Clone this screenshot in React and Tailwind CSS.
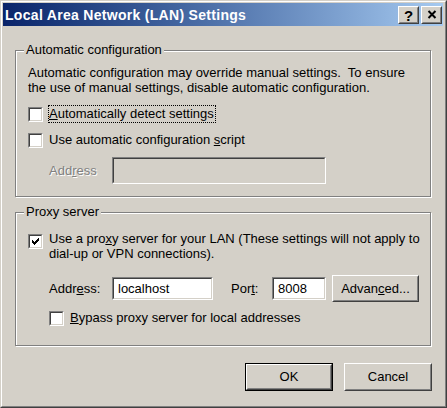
import React from 'react';

const face = 'bg-[#d4d0c8]';

function CheckBox({ checked }) {
  return (
    <div className="w-[15px] h-[15px] shrink-0 border border-t-[#808080] border-l-[#808080] border-b-white border-r-white">
      <div className="w-full h-full border border-t-[#404040] border-l-[#404040] border-b-[#d4d0c8] border-r-[#d4d0c8] bg-white flex items-center justify-center">
        {checked && (
          <svg width="7" height="7" viewBox="0 0 7 7" shapeRendering="crispEdges">
            <path
              fill="#000"
              d="M6 0h1v1h-1z M5 1h2v1h-2z M0 2h1v1h-1z M4 2h3v1h-3z M0 3h2v1h-2z M3 3h3v1h-3z M0 4h5v1h-5z M1 5h3v1h-3z M2 6h1v1h-1z"
            />
          </svg>
        )}
      </div>
    </div>
  );
}

function TextBox({ value, disabled, className }) {
  return (
    <div className={`border border-t-[#808080] border-l-[#808080] border-b-white border-r-white ${className}`}>
      <div
        className={`w-full h-full border border-t-[#404040] border-l-[#404040] border-b-[#d4d0c8] border-r-[#d4d0c8] flex items-center px-[4px] ${
          disabled ? 'bg-[#d4d0c8]' : 'bg-white'
        }`}
      >
        {value}
      </div>
    </div>
  );
}

function Raised({ children, className }) {
  return (
    <div className={`border border-t-white border-l-white border-b-[#404040] border-r-[#404040] ${className}`}>
      <div className="w-full h-full border border-t-[#d4d0c8] border-l-[#d4d0c8] border-b-[#808080] border-r-[#808080] flex items-center justify-center">
        {children}
      </div>
    </div>
  );
}

function Group({ label, className, children }) {
  return (
    <div
      className={`relative w-[416px] border border-[#808080] shadow-[inset_1px_1px_0_#fff,1px_1px_0_#fff] ${className}`}
    >
      <span className={`absolute left-[8px] top-[-9px] px-[2px] leading-[16px] ${face}`}>{label}</span>
      {children}
    </div>
  );
}

export default function App() {
  return (
    <div className="w-[447px] h-[408px] font-['Liberation_Sans',Arial,sans-serif] text-[13px] text-black">
      <div className={`w-full h-full border border-t-[#d4d0c8] border-l-[#d4d0c8] border-b-[#404040] border-r-[#404040] ${face}`}>
        <div className="w-full h-full border border-t-white border-l-white border-b-[#808080] border-r-[#808080] p-[1px] pr-[2px] flex flex-col">
          {/* title bar */}
          <div className="h-[23px] shrink-0 flex items-center bg-linear-to-r from-[#0a246a] to-[#a6caf0] pl-[2px] pr-[1px]">
            <span className="text-white font-bold text-[14px] leading-none tracking-[0.3px]">
              Local Area Network (LAN) Settings
            </span>
            <div className="ml-auto flex gap-[2px]">
              <Raised className="w-[21px] h-[18px] bg-[#d4d0c8]">
                <span className="font-bold text-[15px] leading-none mt-[1px]">?</span>
              </Raised>
              <Raised className="w-[21px] h-[18px] bg-[#d4d0c8]">
                <svg width="10" height="9" viewBox="0 0 10 9">
                  <path d="M1.5 1 L8.5 8 M8.5 1 L1.5 8" stroke="#000" strokeWidth="2" />
                </svg>
              </Raised>
            </div>
          </div>

          {/* body */}
          <div className="flex flex-col pl-[12px]">
            <Group label="Automatic configuration" className="mt-[24px] h-[147px]">
              <div className="pl-[12px] pt-[14px] leading-[15px] whitespace-pre">
                <div>Automatic configuration may override manual settings.  To ensure</div>
                <div>the use of manual settings, disable automatic configuration.</div>
              </div>
              <div className="flex items-center pl-[12px] mt-[10px] h-[18px]">
                <CheckBox />
                <span className="ml-[5px] border border-dotted border-black h-[18px] flex items-center pr-[1px]">
                  <u>A</u>utomatically detect settings
                </span>
              </div>
              <div className="flex items-center pl-[12px] mt-[8px] h-[18px]">
                <CheckBox />
                <span className="ml-[6px]">
                  Use automatic configuration <u>s</u>cript
                </span>
              </div>
              <div className="flex items-center pl-[33px] mt-[8px]">
                <span className="w-[63px] text-[#808080] [text-shadow:1px_1px_0_#fff]">
                  Add<u>r</u>ess
                </span>
                <TextBox disabled className="w-[214px] h-[27px]" />
              </div>
            </Group>

            <Group label="Proxy server" className="mt-[15px] h-[134px]">
              <div className="flex items-start pl-[12px] mt-[18px]">
                <div className="mt-[3px]">
                  <CheckBox checked />
                </div>
                <div className="ml-[6px] leading-[15px]">
                  <div>
                    Use a pro<u>x</u>y server for your LAN (These settings will not apply to
                  </div>
                  <div>dial-up or VPN connections).</div>
                </div>
              </div>
              <div className="flex items-center pl-[33px] mt-[14px] h-[27px]">
                <span className="w-[63px]">
                  Addr<u>e</u>ss:
                </span>
                <TextBox value="localhost" className="w-[101px] h-[23px]" />
                <span className="ml-[18px] w-[41px]">
                  Por<u>t</u>:
                </span>
                <TextBox value="8008" className="w-[54px] h-[23px]" />
                <Raised className="ml-[6px] w-[87px] h-[27px]">
                  Advan<u>c</u>ed...
                </Raised>
              </div>
              <div className="flex items-center pl-[33px] mt-[7px] h-[18px]">
                <CheckBox />
                <span className="ml-[6px]">
                  <u>B</u>ypass proxy server for local addresses
                </span>
              </div>
            </Group>

            <div className="flex justify-end gap-[11px] mt-[17px] pr-[11px]">
              <div className="w-[88px] h-[28px] border border-black">
                <Raised className="w-full h-full">OK</Raised>
              </div>
              <Raised className="w-[88px] h-[28px]">Cancel</Raised>
            </div>
          </div>
        </div>
      </div>
    </div>
  );
}
